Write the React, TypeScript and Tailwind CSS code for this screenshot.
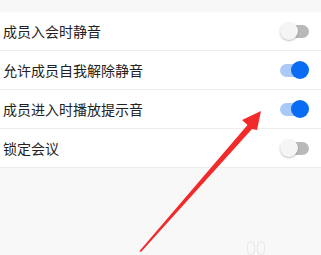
import React from "react";

type Item = { label: string; on: boolean };

const items: Item[] = [
  { label: "成员入会时静音", on: false },
  { label: "允许成员自我解除静音", on: true },
  { label: "成员进入时播放提示音", on: true },
  { label: "锁定会议", on: false },
];

const Toggle = ({ on }: { on: boolean }) => {
  if (on) {
    return (
      <div className="relative w-[29px] h-[18px] flex items-center">
        <div className="w-[26px] h-[13px] rounded-full bg-[#a9c9f7]" />
        <div className="absolute right-0 top-0 w-[18px] h-[18px] rounded-full bg-[#0a6cf2]" />
      </div>
    );
  }
  return (
    <div className="relative w-[29px] h-[18px] flex items-center justify-end">
      <div className="w-[26px] h-[13px] rounded-full bg-[#b9b9b9]" />
      <div className="absolute left-0 top-0 w-[18px] h-[18px] rounded-full bg-[#f5f5f5] shadow-[0_1px_2px_rgba(0,0,0,0.25)]" />
    </div>
  );
};

const App = () => {
  return (
    <div
      className="relative w-[321px] h-[255px] overflow-hidden bg-[#f8f8f8]"
      style={{ fontFamily: '"Noto Sans CJK SC", "Noto Sans", sans-serif' }}
    >
      <div className="h-[12px] bg-[#f7f7f7]" />
      <div className="bg-white">
        {items.map((it) => (
          <div
            key={it.label}
            className="h-[39px] flex items-center justify-between pl-[3px] pr-[12px] border-b border-[#ededed]"
          >
            <span className="text-[14px] text-[#222]">{it.label}</span>
            <Toggle on={it.on} />
          </div>
        ))}
      </div>

      {/* red arrow drawn over the screenshot */}
      <svg className="absolute left-0 top-0" width="321" height="255" viewBox="0 0 321 255">
        <polygon
          points="139.5,251 247.5,125 242,120 261,111 257,130 252,129 141,252"
          fill="#f22a2a"
        />
      </svg>

      {/* faint watermark */}
      <div className="absolute left-[247px] top-[241px] flex gap-[2px] opacity-70">
        <div className="w-[8px] h-[14px] rounded-full border border-[#e0e0e0]" />
        <div className="w-[8px] h-[14px] rounded-full border border-[#e0e0e0]" />
      </div>
    </div>
  );
};

export default App;
